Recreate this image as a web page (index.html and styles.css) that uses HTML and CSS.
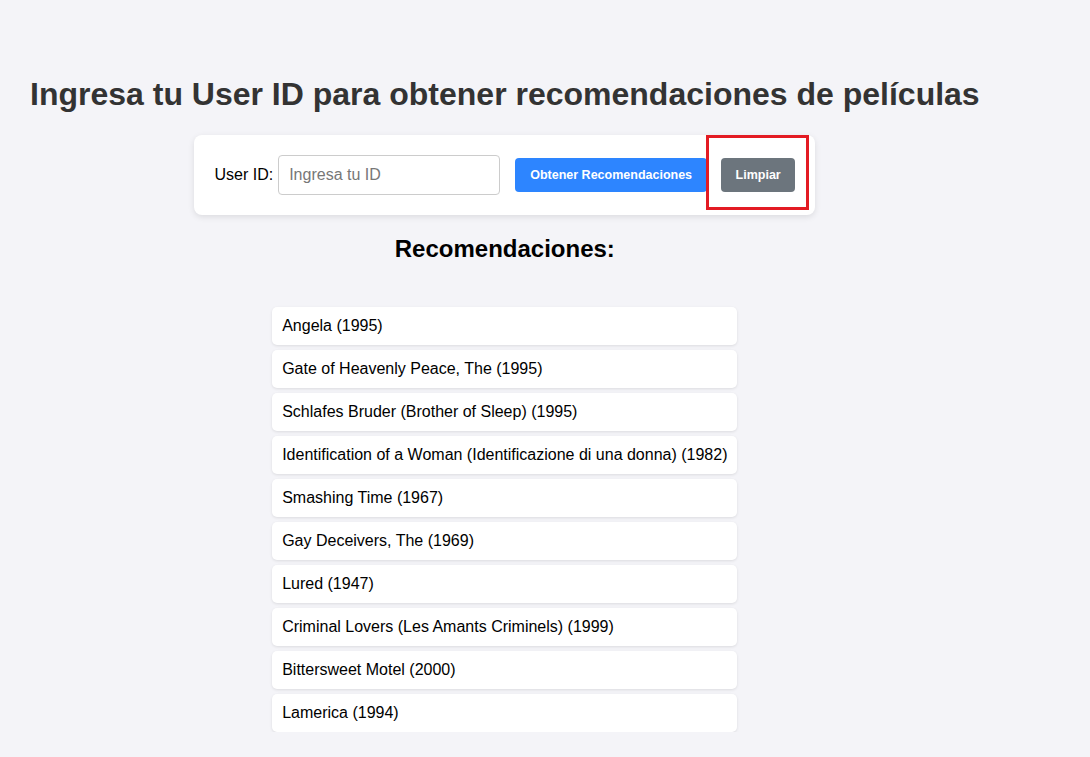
FILE: index.html
```html
<!DOCTYPE html>
<html lang="es">
<head>
<meta charset="utf-8">
<title>Recomendaciones de películas</title>
<link rel="stylesheet" href="styles.css">
</head>
<body>
<div class="app">
  <h1 class="title">Ingresa tu User ID para obtener recomendaciones de películas</h1>
  <div class="form-wrap">
    <form class="form">
      <label class="label" for="uid">User ID:</label>
      <input class="input" id="uid" type="text" placeholder="Ingresa tu ID">
      <button class="btn btn-primary" type="button">Obtener Recomendaciones</button>
      <button class="btn btn-secondary" type="button">Limpiar</button>
      <span class="highlight"></span>
    </form>
  </div>
  <h2 class="subtitle">Recomendaciones:</h2>
  <div class="list-wrap">
    <ul class="list">
      <li class="item">Angela (1995)</li>
      <li class="item">Gate of Heavenly Peace, The (1995)</li>
      <li class="item">Schlafes Bruder (Brother of Sleep) (1995)</li>
      <li class="item">Identification of a Woman (Identificazione di una donna) (1982)</li>
      <li class="item">Smashing Time (1967)</li>
      <li class="item">Gay Deceivers, The (1969)</li>
      <li class="item">Lured (1947)</li>
      <li class="item">Criminal Lovers (Les Amants Criminels) (1999)</li>
      <li class="item">Bittersweet Motel (2000)</li>
      <li class="item">Lamerica (1994)</li>
    </ul>
  </div>
</div>
</body>
</html>
```

FILE: styles.css
```css
html, body {
  margin: 0;
  padding: 0;
  background: #f4f4f8;
}
body {
  font-family: "Liberation Sans", Arial, sans-serif;
  color: #000;
  padding: 55px 0 0 30px;
}
.app {
  width: fit-content;
}
.title {
  margin: 21px 0 0;
  font-size: 32px;
  font-weight: bold;
  color: #333;
  line-height: 36px;
}
.form-wrap {
  display: flex;
  justify-content: center;
  margin-top: 23px;
}
.form {
  position: relative;
  display: flex;
  align-items: center;
  background: #fff;
  padding: 20px;
  border-radius: 8px;
  box-shadow: 0 2px 6px rgba(0, 0, 0, 0.1);
}
.label {
  font-size: 16px;
  margin-right: 5px;
}
.input {
  width: 222px;
  height: 40px;
  box-sizing: border-box;
  padding: 10px;
  font-size: 16px;
  font-family: "Liberation Sans", Arial, sans-serif;
  border: 1px solid #ccc;
  border-radius: 4px;
  margin-right: 15px;
}
.input::placeholder {
  color: #777;
}
.btn {
  height: 34px;
  border: none;
  border-radius: 4px;
  color: #fff;
  font-family: "Liberation Sans", Arial, sans-serif;
  font-weight: bold;
  font-size: 12.5px;
  padding: 0 10px;
  white-space: nowrap;
}
.btn-primary {
  background: #2d85ff;
  width: 192px;
  margin-right: 14px;
}
.btn-secondary {
  background: #6c757d;
  width: 74px;
}
.highlight {
  position: absolute;
  left: 512px;
  top: 0;
  width: 103px;
  height: 75px;
  box-sizing: border-box;
  border: 3.5px solid #e31b23;
}
.subtitle {
  margin: 20px 0 0;
  text-align: center;
  font-size: 24px;
  line-height: 28px;
  font-weight: bold;
}
.list-wrap {
  display: flex;
  justify-content: center;
  margin-top: 44px;
}
.list {
  list-style: none;
  margin: 0;
  padding: 0;
  display: flex;
  flex-direction: column;
  gap: 5px;
}
.item {
  background: #fff;
  padding: 10px;
  font-size: 16px;
  line-height: 18px;
  border-radius: 5px;
  box-shadow: 0 1px 3px rgba(0, 0, 0, 0.1);
}
```
